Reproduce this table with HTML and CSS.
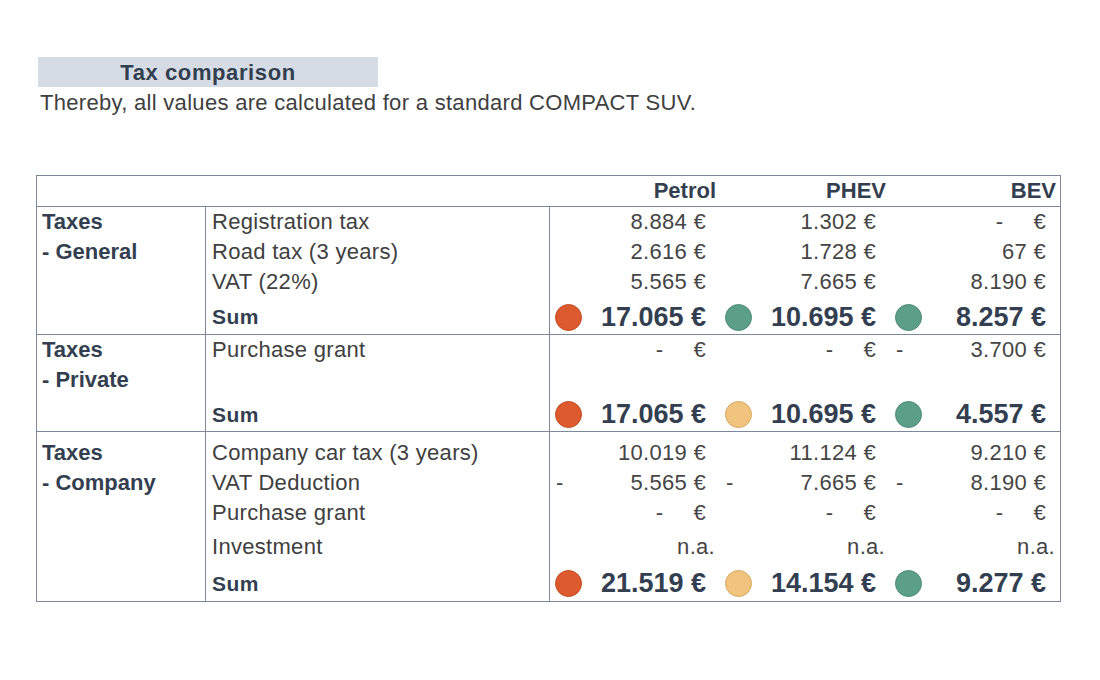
FILE: index.html
```html
<!DOCTYPE html>
<html lang="en">
<head>
<meta charset="utf-8">
<title>Tax comparison</title>
<link rel="stylesheet" href="styles.css">
</head>
<body>
<div class="page">
  <div class="title">Tax comparison</div>
  <div class="subtitle">Thereby, all values are calculated for a standard COMPACT SUV.</div>

  <div class="table">
    <div class="head">
      <div class="hcell">Petrol</div>
      <div class="hcell">PHEV</div>
      <div class="hcell">BEV</div>
    </div>

    <!-- General -->
    <div class="section">
      <div class="col-group">
        <div class="line">Taxes</div>
        <div class="line">- General</div>
      </div>
      <div class="col-label">
        <div class="row">Registration tax</div>
        <div class="row">Road tax (3 years)</div>
        <div class="row">VAT (22%)</div>
        <div class="row row-sum sum-label">Sum</div>
      </div>
      <div class="col-vals">
        <div class="row vrow">
          <div class="cell"><span></span><span>8.884 €</span></div>
          <div class="cell"><span></span><span>1.302 €</span></div>
          <div class="cell"><span></span><span class="zero"><span>-</span><span>€</span></span></div>
        </div>
        <div class="row vrow">
          <div class="cell"><span></span><span>2.616 €</span></div>
          <div class="cell"><span></span><span>1.728 €</span></div>
          <div class="cell"><span></span><span>67 €</span></div>
        </div>
        <div class="row vrow">
          <div class="cell"><span></span><span>5.565 €</span></div>
          <div class="cell"><span></span><span>7.665 €</span></div>
          <div class="cell"><span></span><span>8.190 €</span></div>
        </div>
        <div class="row row-sum vrow">
          <div class="cell"><span class="dot red"></span><span class="sum">17.065 €</span></div>
          <div class="cell"><span class="dot green"></span><span class="sum">10.695 €</span></div>
          <div class="cell"><span class="dot green"></span><span class="sum">8.257 €</span></div>
        </div>
      </div>
    </div>

    <!-- Private -->
    <div class="section">
      <div class="col-group">
        <div class="line">Taxes</div>
        <div class="line">- Private</div>
      </div>
      <div class="col-label">
        <div class="row">Purchase grant</div>
        <div class="row"></div>
        <div class="row row-sum sum-label">Sum</div>
      </div>
      <div class="col-vals">
        <div class="row vrow">
          <div class="cell"><span></span><span class="zero"><span>-</span><span>€</span></span></div>
          <div class="cell"><span></span><span class="zero"><span>-</span><span>€</span></span></div>
          <div class="cell"><span class="minus">-</span><span>3.700 €</span></div>
        </div>
        <div class="row vrow"></div>
        <div class="row row-sum vrow">
          <div class="cell"><span class="dot red"></span><span class="sum">17.065 €</span></div>
          <div class="cell"><span class="dot yellow"></span><span class="sum">10.695 €</span></div>
          <div class="cell"><span class="dot green"></span><span class="sum">4.557 €</span></div>
        </div>
      </div>
    </div>

    <!-- Company -->
    <div class="section section-company">
      <div class="col-group">
        <div class="line">Taxes</div>
        <div class="line">- Company</div>
      </div>
      <div class="col-label">
        <div class="row">Company car tax (3 years)</div>
        <div class="row">VAT Deduction</div>
        <div class="row">Purchase grant</div>
        <div class="row row-inv">Investment</div>
        <div class="row row-last sum-label">Sum</div>
      </div>
      <div class="col-vals">
        <div class="row vrow">
          <div class="cell"><span></span><span>10.019 €</span></div>
          <div class="cell"><span></span><span>11.124 €</span></div>
          <div class="cell"><span></span><span>9.210 €</span></div>
        </div>
        <div class="row vrow">
          <div class="cell"><span class="minus">-</span><span>5.565 €</span></div>
          <div class="cell"><span class="minus">-</span><span>7.665 €</span></div>
          <div class="cell"><span class="minus">-</span><span>8.190 €</span></div>
        </div>
        <div class="row vrow">
          <div class="cell"><span></span><span class="zero"><span>-</span><span>€</span></span></div>
          <div class="cell"><span></span><span class="zero"><span>-</span><span>€</span></span></div>
          <div class="cell"><span></span><span class="zero"><span>-</span><span>€</span></span></div>
        </div>
        <div class="row row-inv vrow">
          <div class="cell"><span></span><span class="na">n.a.</span></div>
          <div class="cell"><span></span><span class="na">n.a.</span></div>
          <div class="cell"><span></span><span class="na">n.a.</span></div>
        </div>
        <div class="row row-last vrow">
          <div class="cell"><span class="dot red"></span><span class="sum">21.519 €</span></div>
          <div class="cell"><span class="dot yellow"></span><span class="sum">14.154 €</span></div>
          <div class="cell"><span class="dot green"></span><span class="sum">9.277 €</span></div>
        </div>
      </div>
    </div>
  </div>
</div>
</body>
</html>
```

FILE: styles.css
```css
html, body {
  margin: 0;
  padding: 0;
  background: #ffffff;
}

body {
  font-family: "Liberation Sans", Arial, sans-serif;
  color: #404040;
}

.page {
  padding-top: 57px;
}

.title {
  margin-left: 38px;
  width: 340px;
  height: 30px;
  line-height: 31px;
  background: #d6dce5;
  color: #333f50;
  font-weight: bold;
  font-size: 22px;
  letter-spacing: 0.6px;
  text-align: center;
}

.subtitle {
  margin-left: 40px;
  height: 31px;
  line-height: 31px;
  font-size: 22px;
  letter-spacing: 0.3px;
  color: #404040;
}

.table {
  margin-top: 57px;
  margin-left: 36px;
  width: 1025px;
  box-sizing: border-box;
  border: 1px solid #7d889c;
}

.head {
  display: grid;
  grid-template-columns: repeat(3, 1fr);
  margin-left: 513px;
  height: 30px;
  align-items: center;
}

.hcell {
  text-align: right;
  padding-right: 4px;
  font-weight: bold;
  font-size: 22px;
  color: #333f50;
}

.section {
  display: flex;
  border-top: 1px solid #7d889c;
}

.col-group {
  width: 169px;
  flex: none;
  box-sizing: border-box;
  border-right: 1px solid #7d889c;
  padding-left: 5px;
}

.line {
  height: 30px;
  line-height: 30px;
  font-weight: bold;
  font-size: 22px;
  color: #333f50;
}

.col-label {
  width: 344px;
  flex: none;
  box-sizing: border-box;
  border-right: 1px solid #7d889c;
  padding-left: 6px;
}

.col-vals {
  flex: 1;
  min-width: 0;
}

.section-company .col-group,
.section-company .col-label,
.section-company .col-vals {
  padding-top: 6px;
}

.row {
  height: 30px;
  display: flex;
  align-items: center;
  font-size: 22px;
  letter-spacing: 0.3px;
  white-space: nowrap;
}

.row-sum {
  height: 37px;
  padding-top: 3px;
  box-sizing: border-box;
}

.section + .section .row-sum {
  height: 36px;
}

.row-inv {
  height: 38px;
}

.row-last {
  height: 35px;
}

.sum-label {
  font-weight: bold;
  font-size: 21px;
  letter-spacing: 0.4px;
  color: #333f50;
}

.vrow {
  display: grid;
  grid-template-columns: repeat(3, 1fr);
  align-items: center;
}

.cell {
  display: flex;
  justify-content: space-between;
  align-items: center;
  padding: 0 14px 0 5px;
  color: #454545;
}

.minus {
  padding-left: 1px;
}

.zero {
  display: inline-flex;
  gap: 30px;
}

.na {
  margin-right: -9px;
}

.sum {
  font-weight: bold;
  font-size: 27px;
  letter-spacing: 0;
  color: #333f50;
}

.dot {
  width: 25px;
  height: 25px;
  border-radius: 50%;
  border: 1px solid;
  flex: none;
}

.dot.red {
  background: #dd5a2f;
  border-color: #c24a22;
}

.dot.yellow {
  background: #f0c47e;
  border-color: #d8a75c;
}

.dot.green {
  background: #5c9f88;
  border-color: #4a8a73;
}
```
